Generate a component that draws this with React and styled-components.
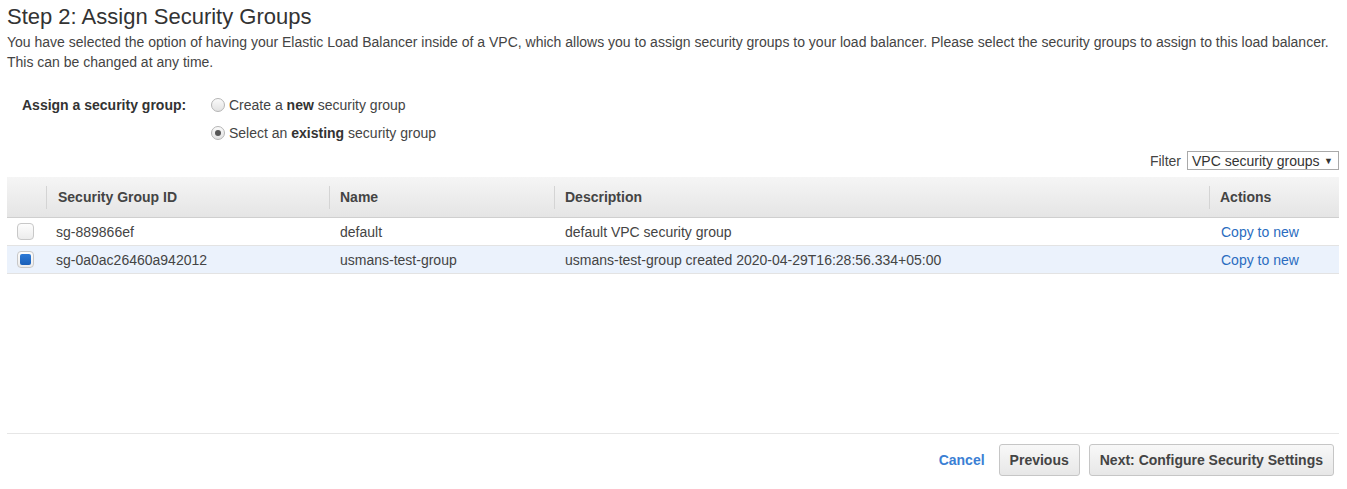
import React from "react";
import styled, { createGlobalStyle } from "styled-components";

const Global = createGlobalStyle`
  body {
    margin: 0;
    background: #fff;
    font-family: "Liberation Sans", Arial, sans-serif;
    font-size: 14px;
    color: #444;
  }
`;

const rows = [
  { id: "sg-889866ef", name: "default", desc: "default VPC security group", selected: false },
  {
    id: "sg-0a0ac26460a942012",
    name: "usmans-test-group",
    desc: "usmans-test-group created 2020-04-29T16:28:56.334+05:00",
    selected: true,
  },
];

export default function App() {
  return (
    <Page>
      <Global />
      <Title>Step 2: Assign Security Groups</Title>
      <Intro>
        You have selected the option of having your Elastic Load Balancer inside of a VPC, which allows you to assign
        security groups to your load balancer. Please select the security groups to assign to this load balancer.
        <br />
        This can be changed at any time.
      </Intro>

      <AssignRow>
        <AssignLabel>Assign a security group:</AssignLabel>
        <Options>
          <Option>
            <Radio />
            <span>
              Create a <b>new</b> security group
            </span>
          </Option>
          <Option>
            <Radio checked />
            <span>
              Select an <b>existing</b> security group
            </span>
          </Option>
        </Options>
      </AssignRow>

      <FilterRow>
        <span>Filter</span>
        <Select>
          <span>VPC security groups</span>
          <Arrow>▼</Arrow>
        </Select>
      </FilterRow>

      <Table>
        <colgroup>
          <col style={{ width: 39 }} />
          <col style={{ width: 283 }} />
          <col style={{ width: 225 }} />
          <col />
          <col style={{ width: 130 }} />
        </colgroup>
        <thead>
          <tr>
            <Th first />
            <Th>Security Group ID</Th>
            <Th>Name</Th>
            <Th>Description</Th>
            <Th>Actions</Th>
          </tr>
        </thead>
        <tbody>
          {rows.map((r) => (
            <Tr key={r.id} selected={r.selected}>
              <Td>
                <Check checked={r.selected} />
              </Td>
              <Td>{r.id}</Td>
              <Td>{r.name}</Td>
              <Td>{r.desc}</Td>
              <Td>
                <Link>Copy to new</Link>
              </Td>
            </Tr>
          ))}
        </tbody>
      </Table>

      <Footer>
        <Cancel>Cancel</Cancel>
        <Button>Previous</Button>
        <Button>Next: Configure Security Settings</Button>
      </Footer>
    </Page>
  );
}

const Page = styled.div`
  padding: 4px 8px 0 7px;
  height: 489px;
  box-sizing: border-box;
  display: flex;
  flex-direction: column;
`;

const Title = styled.h1`
  margin: 0;
  font-size: 22px;
  line-height: 26px;
  font-weight: normal;
  color: #333;
`;

const Intro = styled.p`
  margin: 2px 0 0;
  line-height: 20px;
  color: #444;
`;

const AssignRow = styled.div`
  display: flex;
  margin-top: 19px;
`;

const AssignLabel = styled.div`
  width: 189px;
  padding-left: 15px;
  font-weight: bold;
  line-height: 28px;
  color: #333;
`;

const Options = styled.div`
  display: flex;
  flex-direction: column;
`;

const Option = styled.label`
  display: flex;
  align-items: center;
  gap: 4px;
  height: 28px;
  color: #444;
  b {
    color: #333;
  }
`;

const Radio = styled.span`
  width: 12px;
  height: 12px;
  border-radius: 50%;
  border: 1px solid #b5b5b5;
  background: linear-gradient(#fafafa, #e2e2e2);
  position: relative;
  &::after {
    content: "";
    display: ${(p) => (p.checked ? "block" : "none")};
    position: absolute;
    left: 3px;
    top: 3px;
    width: 6px;
    height: 6px;
    border-radius: 50%;
    background: #555;
  }
`;

const FilterRow = styled.div`
  display: flex;
  justify-content: flex-end;
  align-items: center;
  gap: 6px;
  margin-top: 4px;
  height: 19px;
  color: #444;
`;

const Select = styled.div`
  height: 17px;
  border: 1px solid #a9a9a9;
  display: flex;
  align-items: center;
  justify-content: space-between;
  padding: 0 5px 0 4px;
  box-sizing: content-box;
  width: 141px;
  color: #333;
`;

const Arrow = styled.span`
  font-size: 9px;
  color: #333;
`;

const Table = styled.table`
  margin-top: 7px;
  width: 100%;
  border-collapse: collapse;
  table-layout: fixed;
`;

const Th = styled.th`
  position: relative;
  height: 40px;
  padding: 0 11px;
  text-align: left;
  font-weight: bold;
  color: #444;
  background: linear-gradient(#f5f5f5, #e5e5e5);
  border-bottom: 1px solid #cfcfcf;
  white-space: nowrap;
  &:nth-child(2) {
    padding-left: 12px;
  }
  &::before {
    content: "";
    display: ${(p) => (p.first ? "none" : "block")};
    position: absolute;
    left: 0;
    top: 9px;
    bottom: 8px;
    width: 1px;
    background: #d4d4d4;
  }
`;

const Tr = styled.tr`
  background: ${(p) => (p.selected ? "#ebf2fc" : "#fff")};
`;

const Td = styled.td`
  height: 27px;
  padding: 0 11px;
  border-bottom: 1px solid #e3e3e3;
  color: #444;
  white-space: nowrap;
  &:first-child,
  &:nth-child(2) {
    padding-left: 10px;
  }
  &:last-child {
    padding-left: 12px;
  }
`;

const Check = styled.span`
  display: block;
  width: 15px;
  height: 15px;
  border-radius: 4px;
  border: 1px solid #c8c8c8;
  background: linear-gradient(#fdfdfd, #ececec);
  position: relative;
  &::after {
    content: "";
    display: ${(p) => (p.checked ? "block" : "none")};
    position: absolute;
    left: 2px;
    top: 2px;
    width: 11px;
    height: 11px;
    border-radius: 2px;
    background: linear-gradient(#2d7ad6, #1a5fb8);
  }
`;

const Link = styled.a`
  color: #2a6cc0;
  cursor: pointer;
`;

const Footer = styled.div`
  margin-top: auto;
  margin-bottom: 13px;
  border-top: 1px solid #e6e6e6;
  padding-top: 10px;
  padding-right: 5px;
  display: flex;
  justify-content: flex-end;
  align-items: center;
  gap: 9px;
`;

const Cancel = styled.a`
  font-weight: bold;
  color: #3b7fd4;
  margin-right: 5px;
  cursor: pointer;
`;

const Button = styled.button`
  height: 32px;
  padding: 0 10px;
  border: 1px solid #c6c6c6;
  border-radius: 3px;
  background: linear-gradient(#f8f8f8, #e7e7e7);
  font-family: "Liberation Sans", Arial, sans-serif;
  font-size: 14px;
  font-weight: bold;
  color: #444;
`;
